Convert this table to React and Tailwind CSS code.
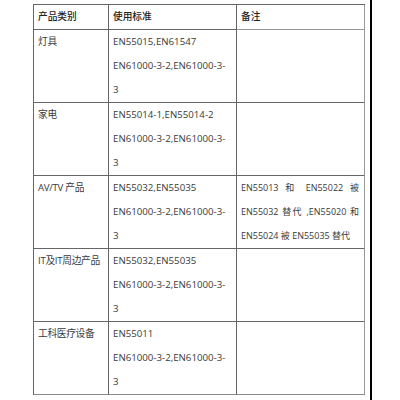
const rows = [
  {
    type: '灯具',
    std: ['EN55015,EN61547', 'EN61000-3-2,EN61000-3-', '3'],
    note: null,
  },
  {
    type: '家电',
    std: ['EN55014-1,EN55014-2', 'EN61000-3-2,EN61000-3-', '3'],
    note: null,
  },
  {
    type: 'AV/TV 产品',
    std: ['EN55032,EN55035', 'EN61000-3-2,EN61000-3-', '3'],
    note: ['EN55013 和 EN55022 被', 'EN55032 替代 ,EN55020 和', 'EN55024 被 EN55035 替代'],
  },
  {
    type: 'IT及IT周边产品',
    std: ['EN55032,EN55035', 'EN61000-3-2,EN61000-3-', '3'],
    note: null,
  },
  {
    type: '工科医疗设备',
    std: ['EN55011', 'EN61000-3-2,EN61000-3-', '3'],
    note: null,
  },
]

export default function App() {
  return (
    <div
      className="flex h-[400px] w-[400px] bg-white pl-[33px] text-[9.7px] leading-[24px] text-[#3a3a3a]"
      style={{ fontFamily: '"Open Sans", "Noto Sans CJK SC", sans-serif' }}
    >
      <div className="mt-[4px] self-start">
        <div className="grid grid-cols-[75px_128px_128px] border-l border-t border-[#666] whitespace-nowrap">
          {/* header */}
          <div className="h-[25px] border-b border-r border-[#666] px-[4px] font-medium text-[#222]">产品类别</div>
          <div className="h-[25px] border-b border-r border-[#666] px-[4px] font-medium text-[#222]">使用标准</div>
          <div className="h-[25px] border-b border-r border-[#999] px-[4px] font-medium text-[#222]">备注</div>

          {rows.map((r, i) => {
            const last = i === rows.length - 1
            const bottom = last ? 'border-b-[#8a8a8a]' : 'border-b-[#666]'
            return [
              <div key={i + 'a'} className={`h-[73px] border-b border-r border-[#666] px-[4px] tracking-[-0.3px] ${bottom}`}>
                {r.type}
              </div>,
              <div key={i + 'b'} className={`h-[73px] border-b border-r border-[#666] px-[4px] ${bottom}`}>
                {r.std.map((s) => (
                  <div key={s}>{s}</div>
                ))}
              </div>,
              <div key={i + 'c'} className={`h-[73px] border-b border-r border-r-[#999] pl-[4px] pr-[5px] text-[9px] ${bottom}`}>
                {r.note &&
                  r.note.map((n, j) => (
                    <div
                      key={j}
                      className={j < r.note.length - 1 ? 'text-justify [text-align-last:justify]' : ''}
                    >
                      {n}
                    </div>
                  ))}
              </div>,
            ]
          })}
        </div>
      </div>
      <div className="ml-[5px] w-[2px] bg-black" />
    </div>
  )
}
